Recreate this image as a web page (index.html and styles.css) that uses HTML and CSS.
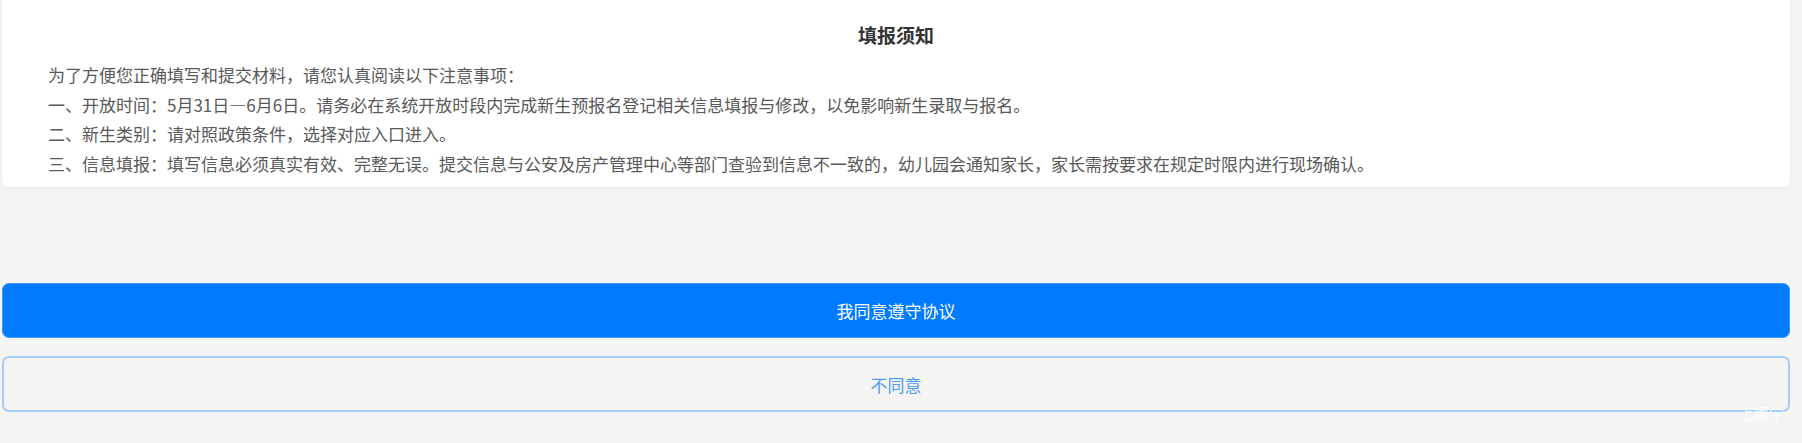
FILE: index.html
```html
<!DOCTYPE html>
<html lang="zh-CN">
<head>
    <meta charset="UTF-8">
    <meta name="viewport" content="width=device-width, initial-scale=1.0">
    <title>填报须知</title>
    <link rel="stylesheet" href="styles.css">
</head>
<body>
    <div class="page">
        <div class="notice-card">
            <h2 class="notice-title">填报须知</h2>
            <div class="notice-body">
                <p>为了方便您正确填写和提交材料，请您认真阅读以下注意事项：</p>
                <p>一、开放时间：5月31日—6月6日。请务必在系统开放时段内完成新生预报名登记相关信息填报与修改，以免影响新生录取与报名。</p>
                <p>二、新生类别：请对照政策条件，选择对应入口进入。</p>
                <p>三、信息填报：填写信息必须真实有效、完整无误。提交信息与公安及房产管理中心等部门查验到信息不一致的，幼儿园会通知家长，家长需按要求在规定时限内进行现场确认。</p>
            </div>
        </div>

        <div class="actions">
            <button type="button" class="btn btn-agree">我同意遵守协议</button>
            <button type="button" class="btn btn-disagree">不同意</button>
        </div>
    </div>

    <!-- watermark -->
    <span class="watermark">上哪学</span>
</body>
</html>
```

FILE: styles.css
```css
body {
    margin: 0;
    background: #f4f4f4;
    font-family: "Noto Sans CJK SC", "Noto Sans", sans-serif;
    height: 443px;
    overflow: hidden;
    position: relative;
}

.page {
    padding: 0 12px 0 2px;
}

.notice-card {
    background: white;
    border-radius: 0 0 6px 6px;
    box-shadow: 0 1px 4px rgba(0,0,0,0.06);
    padding: 20px 46px 9px 46px;
}

.notice-title {
    margin: 0 0 10px;
    text-align: center;
    font-size: 19px;
    line-height: 30px;
    font-weight: bold;
    color: #333;
}

.notice-body p {
    margin: 0;
    font-size: 17px;
    line-height: 29.5px;
    color: #595959;
}

.actions {
    margin-top: 96px;
    display: flex;
    flex-direction: column;
    gap: 18px;
}

.btn {
    width: 100%;
    height: 55px;
    border-radius: 7px;
    font-family: inherit;
    font-size: 17px;
    cursor: pointer;
}

.btn-agree {
    background: #007aff;
    color: white;
    border: 1px solid #3d97ff;
}

.btn-disagree {
    height: 56px;
    background: #f4f4f4;
    color: #4f9af5;
    border: 2px solid #a3ccfb;
}

.watermark {
    position: absolute;
    left: 1739px;
    top: 402px;
    font-size: 15px;
    color: rgba(255,255,255,0.9);
}
```
